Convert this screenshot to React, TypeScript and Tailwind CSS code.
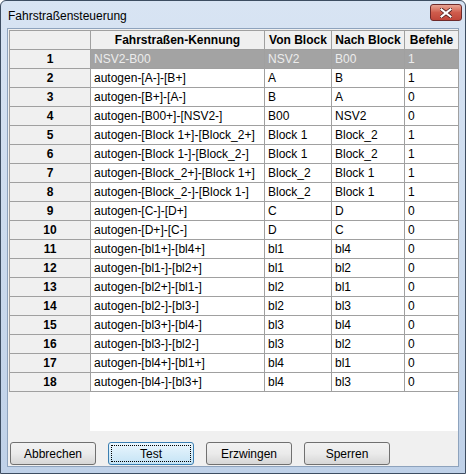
import React from "react"

const ROWS: [string, string, string, string][] = [
  ["NSV2-B00", "NSV2", "B00", "1"],
  ["autogen-[A-]-[B+]", "A", "B", "1"],
  ["autogen-[B+]-[A-]", "B", "A", "0"],
  ["autogen-[B00+]-[NSV2-]", "B00", "NSV2", "0"],
  ["autogen-[Block 1+]-[Block_2+]", "Block 1", "Block_2", "1"],
  ["autogen-[Block 1-]-[Block_2-]", "Block 1", "Block_2", "1"],
  ["autogen-[Block_2+]-[Block 1+]", "Block_2", "Block 1", "1"],
  ["autogen-[Block_2-]-[Block 1-]", "Block_2", "Block 1", "1"],
  ["autogen-[C-]-[D+]", "C", "D", "0"],
  ["autogen-[D+]-[C-]", "D", "C", "0"],
  ["autogen-[bl1+]-[bl4+]", "bl1", "bl4", "0"],
  ["autogen-[bl1-]-[bl2+]", "bl1", "bl2", "0"],
  ["autogen-[bl2+]-[bl1-]", "bl2", "bl1", "0"],
  ["autogen-[bl2-]-[bl3-]", "bl2", "bl3", "0"],
  ["autogen-[bl3+]-[bl4-]", "bl3", "bl4", "0"],
  ["autogen-[bl3-]-[bl2-]", "bl3", "bl2", "0"],
  ["autogen-[bl4+]-[bl1+]", "bl4", "bl1", "0"],
  ["autogen-[bl4-]-[bl3+]", "bl4", "bl3", "0"],
]

const HEADERS = ["Fahrstraßen-Kennung", "Von Block", "Nach Block", "Befehle"]

function Button({ label, focused }: { label: string; focused?: boolean }) {
  return (
    <button
      className={`w-[86px] h-[23px] rounded-[3px] border text-[12px] text-black p-[2px] ${
        focused
          ? "border-[#3c7fb1] bg-gradient-to-b from-[#eaf6fd] to-[#c4e3f5]"
          : "border-[#707070] bg-gradient-to-b from-[#f2f2f2] via-[#ebebeb] to-[#d6d6d6]"
      }`}
    >
      <span
        className={`flex items-center justify-center w-full h-full ${
          focused ? "border border-dotted border-black" : ""
        }`}
      >
        {label}
      </span>
    </button>
  )
}

export default function App() {
  return (
    <div className="w-[466px] h-[474px] bg-white font-['Liberation_Sans',Arial,sans-serif]">
      <div className="w-full h-full flex flex-col border border-[#3d4d61] rounded-t-[6px] bg-gradient-to-b from-[#d8e4f3] to-[#bfd1e8]">
        {/* Title bar */}
        <div className="h-[27px] flex items-center justify-between pl-[7px] pr-[3px]">
          <span className="text-[12px] text-black pt-[2px]">Fahrstraßensteuerung</span>
          <div className="w-[32px] h-[17px] -mt-[4px] rounded-[3px] border border-[#6e2a2a] bg-gradient-to-b from-[#e8a595] via-[#cf5c4c] to-[#c0463a] flex items-center justify-center">
            <svg width="12" height="10" viewBox="0 0 12 10">
              <path d="M1.5 1.5 L10.5 8.5 M10.5 1.5 L1.5 8.5" stroke="#4a1a1a" strokeWidth="3.6" strokeLinecap="square" />
              <path d="M1.5 1.5 L10.5 8.5 M10.5 1.5 L1.5 8.5" stroke="#ffffff" strokeWidth="2.2" strokeLinecap="square" />
            </svg>
          </div>
        </div>

        {/* Client area */}
        <div className="flex-1 mx-[6px] mb-[6px] border border-[#8ea3bd] bg-[#f0f0f0] flex flex-col">
          <div className="ml-[1px] mt-[1px] w-[449px] flex flex-col">
            <table className="border-collapse table-fixed text-[12px] w-[449px]">
              <colgroup>
                <col className="w-[81px]" />
                <col className="w-[174px]" />
                <col className="w-[67px]" />
                <col className="w-[73px]" />
                <col className="w-[54px]" />
              </colgroup>
              <thead>
                <tr className="h-[19px]">
                  <th className="border border-[#a0a0a0] bg-[#f0f0f0]" />
                  {HEADERS.map((h) => (
                    <th key={h} className="border border-[#a0a0a0] bg-[#f0f0f0] font-bold text-center leading-[17px] p-0 whitespace-nowrap">
                      {h}
                    </th>
                  ))}
                </tr>
              </thead>
              <tbody>
                {ROWS.map((r, i) => {
                  const sel = i === 0
                  return (
                    <tr key={i} className="h-[19px]">
                      <td className="border border-[#a0a0a0] bg-[#f0f0f0] font-bold text-center leading-[18px] p-0">{i + 1}</td>
                      {r.map((c, j) => (
                        <td
                          key={j}
                          className={`border border-[#a0a0a0] leading-[18px] py-0 pl-[3px] pr-0 whitespace-nowrap overflow-hidden ${
                            sel ? "bg-[#a3a3a3] text-[#ececec]" : "bg-white text-black"
                          }`}
                        >
                          {c}
                        </td>
                      ))}
                    </tr>
                  )
                })}
              </tbody>
            </table>
            <div className="flex h-[39px]">
              <div className="w-[81px]" />
              <div className="flex-1 bg-white" />
            </div>
          </div>

          {/* Buttons */}
          <div className="flex gap-[12px] pl-[2px] mt-[11px]">
            <Button label="Abbrechen" />
            <Button label="Test" focused />
            <Button label="Erzwingen" />
            <Button label="Sperren" />
          </div>
        </div>
      </div>
    </div>
  )
}
